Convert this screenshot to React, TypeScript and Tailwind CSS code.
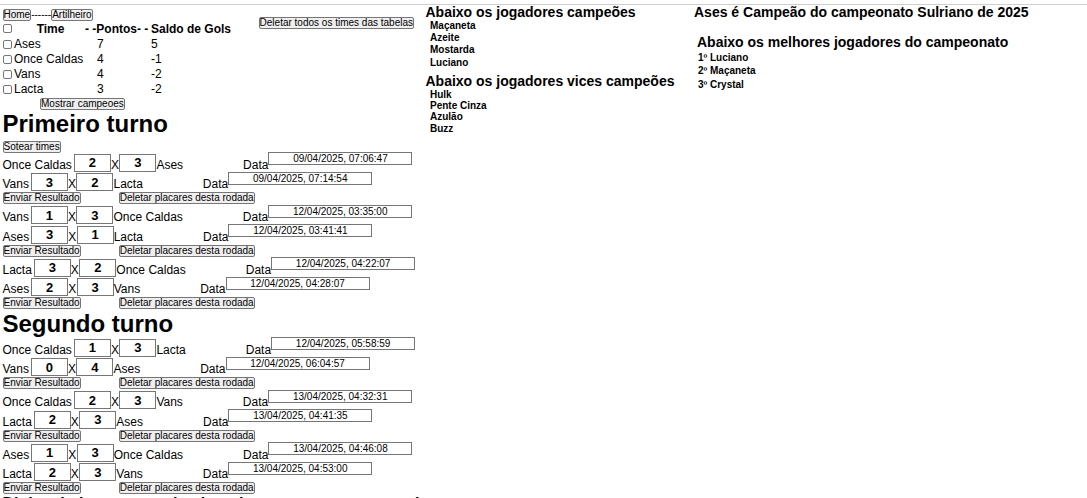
import React from "react"

type Match = { home: string; hs: number; as: number; away: string; date: string }

const tabela = [
  { time: "Ases", pontos: 7, saldo: 5 },
  { time: "Once Caldas", pontos: 4, saldo: -1 },
  { time: "Vans", pontos: 4, saldo: -2 },
  { time: "Lacta", pontos: 3, saldo: -2 },
]

const primeiroTurno: Match[][] = [
  [
    { home: "Once Caldas", hs: 2, as: 3, away: "Ases", date: "09/04/2025, 07:06:47" },
    { home: "Vans", hs: 3, as: 2, away: "Lacta", date: "09/04/2025, 07:14:54" },
  ],
  [
    { home: "Vans", hs: 1, as: 3, away: "Once Caldas", date: "12/04/2025, 03:35:00" },
    { home: "Ases", hs: 3, as: 1, away: "Lacta", date: "12/04/2025, 03:41:41" },
  ],
  [
    { home: "Lacta", hs: 3, as: 2, away: "Once Caldas", date: "12/04/2025, 04:22:07" },
    { home: "Ases", hs: 2, as: 3, away: "Vans", date: "12/04/2025, 04:28:07" },
  ],
]

const segundoTurno: Match[][] = [
  [
    { home: "Once Caldas", hs: 1, as: 3, away: "Lacta", date: "12/04/2025, 05:58:59" },
    { home: "Vans", hs: 0, as: 4, away: "Ases", date: "12/04/2025, 06:04:57" },
  ],
  [
    { home: "Once Caldas", hs: 2, as: 3, away: "Vans", date: "13/04/2025, 04:32:31" },
    { home: "Lacta", hs: 2, as: 3, away: "Ases", date: "13/04/2025, 04:41:35" },
  ],
  [
    { home: "Ases", hs: 1, as: 3, away: "Once Caldas", date: "13/04/2025, 04:46:08" },
    { home: "Lacta", hs: 2, as: 3, away: "Vans", date: "13/04/2025, 04:53:00" },
  ],
]

// plain browser-looking button
function Btn({ children, className = "" }: { children: React.ReactNode; className?: string }) {
  return (
    <button
      className={
        "h-[12px] px-0 border border-[#767676] bg-[#efefef] rounded-[2px] text-[10px] leading-[10px] text-black whitespace-nowrap " +
        className
      }
    >
      {children}
    </button>
  )
}

function Checkbox() {
  return <span className="block w-[9px] h-[9px] border border-[#767676] rounded-[2px] bg-white ml-[0.8px] mr-[1.7px] shrink-0" />
}

function ScoreBox({ value }: { value: number }) {
  return (
    <div className="w-[37px] h-[18px] border border-[#767676] flex items-center justify-center font-bold text-[13px] leading-none shrink-0">
      {value}
    </div>
  )
}

function MatchRow({ m }: { m: Match }) {
  return (
    <div className="flex items-end h-[19.5px] whitespace-nowrap">
      <span className="leading-[14px]">{m.home}</span>
      <div className="ml-[2px]">
        <ScoreBox value={m.hs} />
      </div>
      <span className="leading-[14px] w-[8.5px]">X</span>
      <ScoreBox value={m.as} />
      <span className="leading-[14px]">{m.away}</span>
      <span className="leading-[14px] ml-[60px]">Data</span>
      <div className="self-start w-[144px] h-[13px] border border-[#767676] text-[10px] leading-[11px] text-center shrink-0">
        {m.date}
      </div>
    </div>
  )
}

function Turno({ title, rounds }: { title: string; rounds: Match[][] }) {
  return (
    <div>
      <h1 className="text-[24px] font-bold leading-[27.6px]">{title}</h1>
      {title === "Primeiro turno" && (
        <div className="mt-[3.2px] h-[11.5px] flex">
          <Btn className="h-[11.5px]">Sotear times</Btn>
        </div>
      )}
      {rounds.map((r, i) => (
        <div key={i}>
          {r.map((m, j) => (
            <MatchRow key={j} m={m} />
          ))}
          <div className="h-[13.5px] pt-[1px] flex">
            <Btn>Enviar Resultado</Btn>
            <Btn className="ml-[38px]">Deletar placares desta rodada</Btn>
          </div>
        </div>
      ))}
    </div>
  )
}

// Left side: table + matches
function LeftColumn() {
  return (
    <div className="w-[425.5px] shrink-0 pl-[2.5px] text-[12px]">
      <div className="flex w-[411.5px]">
        <div>
          {/* nav */}
          <div className="mt-[4px] h-[11.5px] flex items-start">
            <Btn className="h-[11px]">Home</Btn>
            <span className="text-[10px] leading-[11px]">------</span>
            <Btn className="h-[11px]">Artilheiro</Btn>
          </div>

          {/* classification table */}
          <div className="grid grid-cols-[82.5px_66px_auto] whitespace-nowrap">
            <div className="flex items-center h-[16px]">
              <Checkbox />
              <span className="font-bold leading-[16px] ml-[22.7px]">Time</span>
            </div>
            <div className="font-bold leading-[16px]">- -Pontos- -</div>
            <div className="font-bold leading-[16px]">Saldo de Gols</div>
            {tabela.map((t) => (
              <React.Fragment key={t.time}>
                <div className="flex items-center h-[15px]">
                  <Checkbox />
                  <span className="leading-[15px]">{t.time}</span>
                </div>
                <div className="leading-[15px] pl-[12px]">{t.pontos}</div>
                <div className="leading-[15px]">{t.saldo}</div>
              </React.Fragment>
            ))}
          </div>

          <div className="mt-[1.5px] flex">
            <Btn className="ml-[37.5px]">Mostrar campeoes</Btn>
          </div>
        </div>
        <div className="ml-auto mt-[7.7px]">
          <Btn className="h-[11.6px]">Deletar todos os times das tabelas</Btn>
        </div>
      </div>

      <Turno title="Primeiro turno" rounds={primeiroTurno} />
      <Turno title="Segundo turno" rounds={segundoTurno} />

      <h3 className="text-[16px] font-bold leading-[18px] whitespace-nowrap">
        Digite abaixo o nome dos jogadores que marcaram gols no campeonato
      </h3>
    </div>
  )
}

function MiddleColumn() {
  const campeoes = ["Maçaneta", "Azeite", "Mostarda", "Luciano"]
  const vices = ["Hulk", "Pente Cinza", "Azulão", "Buzz"]
  return (
    <div className="w-[268.5px] shrink-0 whitespace-nowrap">
      <h3 className="text-[14px] font-bold leading-[14px]">Abaixo os jogadores campeões</h3>
      <div className="mt-[1px] pl-[4.5px]">
        {campeoes.map((n) => (
          <div key={n} className="text-[10px] font-bold leading-[12.2px]">
            {n}
          </div>
        ))}
      </div>
      <h3 className="mt-[5.3px] text-[14px] font-bold leading-[14px]">Abaixo os jogadores vices campeões</h3>
      <div className="mt-[0.5px] pl-[4.5px]">
        {vices.map((n) => (
          <div key={n} className="text-[10px] font-bold leading-[11.4px]">
            {n}
          </div>
        ))}
      </div>
    </div>
  )
}

function RightColumn() {
  const melhores = ["1º Luciano", "2º Maçaneta", "3º Crystal"]
  return (
    <div className="whitespace-nowrap">
      <h3 className="text-[14px] font-bold leading-[14px]">Ases é Campeão do campeonato Sulriano de 2025</h3>
      <div className="pl-[3px]">
        <h3 className="mt-[16px] text-[14px] font-bold leading-[14px]">Abaixo os melhores jogadores do campeonato</h3>
        <div className="mt-[2px] pl-[1px]">
          {melhores.map((n) => (
            <div key={n} className="text-[10px] font-bold leading-[13.3px]">
              {n}
            </div>
          ))}
        </div>
      </div>
    </div>
  )
}

export default function App() {
  return (
    <div className="w-[1087px] min-h-[498px] bg-white text-black font-['Liberation_Sans',Arial,sans-serif]">
      <div className="pt-[4px]">
        <div className="h-px bg-[#cfcfcf]" />
      </div>
      <div className="flex">
        <LeftColumn />
        <MiddleColumn />
        <RightColumn />
      </div>
    </div>
  )
}
